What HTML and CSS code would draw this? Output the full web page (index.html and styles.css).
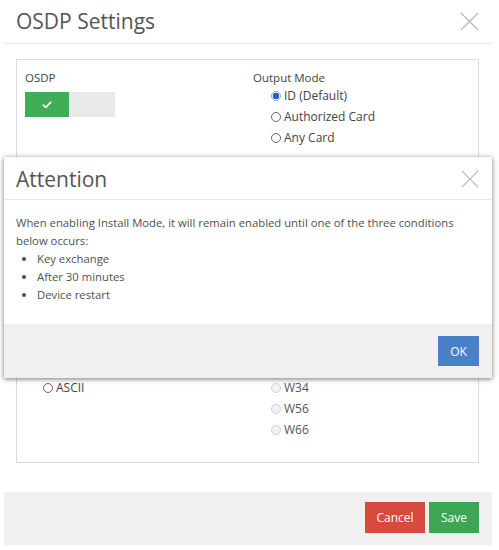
FILE: index.html
```html
<!DOCTYPE html>
<html lang="en">
<head>
<meta charset="utf-8">
<title>OSDP Settings</title>
<link rel="stylesheet" href="styles.css">
</head>
<body>
<div class="page">
  <div class="modal">
    <div class="modal-header">
      <h1 class="title">OSDP Settings</h1>
      <span class="close">
        <svg viewBox="0 0 20 20" width="19" height="19"><path d="M1 1 L19 19 M19 1 L1 19" stroke="#b5b5b5" stroke-width="1.3" fill="none"/></svg>
      </span>
    </div>
    <div class="modal-body">
      <div class="panel">
        <div class="grid">
          <div class="col">
            <div class="label">OSDP</div>
            <div class="toggle">
              <span class="toggle-on">
                <svg viewBox="0 0 12 10" width="10" height="8"><path d="M1.5 5.2 L4.5 8 L10.5 1.8" stroke="#fff" stroke-width="2.2" fill="none" stroke-linecap="round" stroke-linejoin="round"/></svg>
              </span>
              <span class="toggle-off"></span>
            </div>
          </div>
          <div class="col">
            <div class="label">Output Mode</div>
            <div class="radios">
              <label class="radio"><span class="dot dot-checked"></span>ID (Default)</label>
              <label class="radio"><span class="dot"></span>Authorized Card</label>
              <label class="radio"><span class="dot"></span>Any Card</label>
            </div>
          </div>
        </div>
        <div class="grid grid-lower">
          <div class="col">
            <div class="radios">
              <label class="radio"><span class="dot"></span>ASCII</label>
            </div>
          </div>
          <div class="col">
            <div class="radios">
              <label class="radio radio-muted"><span class="dot dot-muted"></span>W34</label>
              <label class="radio radio-muted"><span class="dot dot-muted"></span>W56</label>
              <label class="radio radio-muted"><span class="dot dot-muted"></span>W66</label>
            </div>
          </div>
        </div>
      </div>
    </div>
    <div class="modal-footer">
      <button class="btn btn-cancel">Cancel</button>
      <button class="btn btn-save">Save</button>
    </div>
  </div>

  <div class="dialog">
    <div class="dialog-header">
      <h2 class="title">Attention</h2>
      <span class="close close-small">
        <svg viewBox="0 0 20 20" width="18" height="18"><path d="M1 1 L19 19 M19 1 L1 19" stroke="#b5b5b5" stroke-width="1.3" fill="none"/></svg>
      </span>
    </div>
    <div class="dialog-body">
      <p class="msg">When enabling Install Mode, it will remain enabled until one of the three conditions below occurs:</p>
      <ul class="list">
        <li>Key exchange</li>
        <li>After 30 minutes</li>
        <li>Device restart</li>
      </ul>
    </div>
    <div class="dialog-footer">
      <button class="btn btn-ok">OK</button>
    </div>
  </div>
</div>
</body>
</html>
```

FILE: styles.css
```css
html, body {
  margin: 0;
  padding: 0;
  background: #fff;
}
body {
  font-family: "Open Sans", "Liberation Sans", sans-serif;
  color: #4a4a4a;
  font-size: 11px;
}
.page {
  position: relative;
  width: 499px;
  height: 550px;
  padding-left: 4px;
  box-sizing: border-box;
}
.modal {
  width: 488px;
  background: #fff;
}
.modal-header {
  height: 43px;
  border-bottom: 1px solid #e8e8e8;
  display: flex;
  align-items: center;
  justify-content: space-between;
  padding: 0 13px 0 12px;
}
.title {
  margin: 0;
  font-size: 21px;
  font-weight: 400;
  color: #555;
  line-height: 1;
}
.close {
  display: flex;
}
.modal-body {
  padding: 15px 13px 29px 12px;
}
.panel {
  border: 1px solid #dcdcdc;
  padding: 10px 8px 22px 8px;
}
.grid {
  display: grid;
  grid-template-columns: 228px 1fr;
}
.grid-lower {
  margin-top: 229px;
}
.label {
  line-height: 15px;
  font-size: 11.5px;
  color: #444;
}
.toggle {
  margin-top: 7px;
  display: flex;
  width: 90px;
  height: 25px;
}
.toggle-on {
  width: 44px;
  background: #3fae57;
  display: flex;
  align-items: center;
  justify-content: center;
}
.toggle-off {
  flex: 1;
  background: #e9e9e9;
}
.radios {
  display: flex;
  flex-direction: column;
  padding-left: 18px;
}
.radio {
  display: flex;
  align-items: center;
  height: 21px;
  font-size: 12px;
  color: #444;
}
.dot {
  width: 10px;
  height: 10px;
  border: 1px solid #666;
  border-radius: 50%;
  box-sizing: border-box;
  margin-right: 3px;
  background: #fff;
}
.dot-checked {
  border: 1px solid #8aa6d6;
  background: radial-gradient(circle, #2563c9 0 3px, #fff 3.6px);
}
.dot-muted {
  border-color: #d0d0d0;
  background: #f3f3f3;
}
.radio-muted {
  color: #555;
}
.modal-footer {
  height: 53px;
  background: #f0f0f0;
  display: flex;
  justify-content: flex-end;
  align-items: flex-start;
  gap: 4px;
  padding: 10px 13px 0 0;
  box-sizing: border-box;
}
.btn {
  border: none;
  color: #fff;
  font-family: "Open Sans", "Liberation Sans", sans-serif;
  font-size: 12px;
  height: 31px;
  padding: 0;
  cursor: pointer;
}
.btn-cancel {
  width: 60px;
  background: #d64b3e;
}
.btn-save {
  width: 50px;
  background: #3ca652;
}
.dialog {
  position: absolute;
  top: 157px;
  left: 4px;
  width: 488px;
  height: 221px;
  background: #fff;
  box-shadow: 0 1px 5px rgba(0, 0, 0, 0.55);
  display: flex;
  flex-direction: column;
}
.dialog-header {
  height: 43px;
  box-sizing: border-box;
  border-bottom: 1px solid #e8e8e8;
  display: flex;
  align-items: center;
  justify-content: space-between;
  padding: 2px 13px 0 12px;
}
.dialog-body {
  flex: 1;
  padding: 14px 12px 0 12px;
  line-height: 18px;
  font-size: 11.3px;
  color: #505050;
}
.msg {
  margin: 0;
}
.list {
  margin: 0;
  padding-left: 21px;
}
.dialog-footer {
  height: 54px;
  background: #f0f0f0;
  display: flex;
  justify-content: flex-end;
  align-items: flex-start;
  padding: 12px 13px 0 0;
  box-sizing: border-box;
}
.btn-ok {
  width: 41px;
  height: 30px;
  background: #4a7fc9;
}
```
